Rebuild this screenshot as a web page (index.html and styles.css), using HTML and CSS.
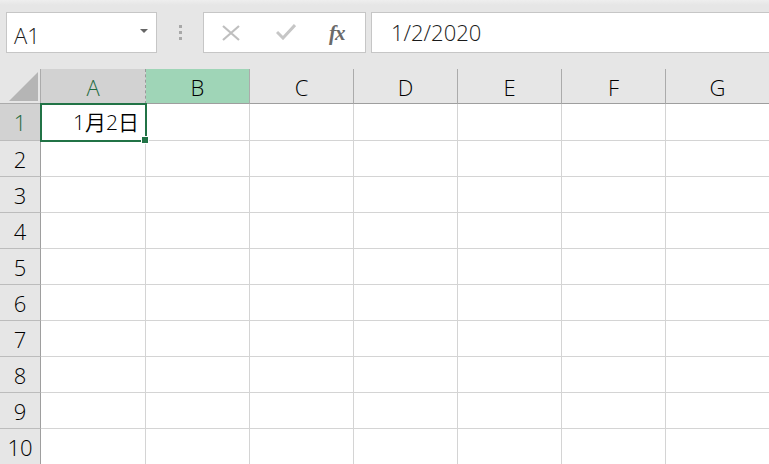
FILE: index.html
```html
<!DOCTYPE html>
<html lang="ja">
<head>
<meta charset="utf-8">
<title>Excel</title>
<link rel="stylesheet" href="styles.css">
</head>
<body>
<div class="app">
  <div class="toolbar">
    <div class="namebox">
      <span class="nb-text">A1</span>
      <span class="nb-arrow"></span>
    </div>
    <div class="grip"><i></i><i></i><i></i></div>
    <div class="fxbtns">
      <svg class="ico ico-x" width="18" height="16" viewBox="0 0 18 16"><path d="M1 1 L17 15 M17 1 L1 15" stroke="#bfbfbf" stroke-width="2.2" fill="none"/></svg>
      <svg class="ico ico-check" width="20" height="16" viewBox="0 0 20 16"><path d="M1 8 L7 14 L19 1" stroke="#c6c6c6" stroke-width="3" fill="none"/></svg>
      <span class="fx">fx</span>
    </div>
    <div class="formula">1/2/2020</div>
  </div>
  <div class="sheet">
    <div class="corner"><svg width="29" height="29" viewBox="0 0 29 29"><path d="M29 0 L29 29 L0 29 Z" fill="#b5b5b5"/></svg></div>
    <div class="ch ch-sel">A</div>
    <div class="ch ch-hl">B</div>
    <div class="ch">C</div>
    <div class="ch">D</div>
    <div class="ch">E</div>
    <div class="ch">F</div>
    <div class="ch">G</div>

    <div class="rh rh-sel">1</div>
    <div class="cell num">1月2日</div><div class="cell"></div><div class="cell"></div><div class="cell"></div><div class="cell"></div><div class="cell"></div><div class="cell"></div>
    <div class="rh">2</div>
    <div class="cell"></div><div class="cell"></div><div class="cell"></div><div class="cell"></div><div class="cell"></div><div class="cell"></div><div class="cell"></div>
    <div class="rh">3</div>
    <div class="cell"></div><div class="cell"></div><div class="cell"></div><div class="cell"></div><div class="cell"></div><div class="cell"></div><div class="cell"></div>
    <div class="rh">4</div>
    <div class="cell"></div><div class="cell"></div><div class="cell"></div><div class="cell"></div><div class="cell"></div><div class="cell"></div><div class="cell"></div>
    <div class="rh">5</div>
    <div class="cell"></div><div class="cell"></div><div class="cell"></div><div class="cell"></div><div class="cell"></div><div class="cell"></div><div class="cell"></div>
    <div class="rh">6</div>
    <div class="cell"></div><div class="cell"></div><div class="cell"></div><div class="cell"></div><div class="cell"></div><div class="cell"></div><div class="cell"></div>
    <div class="rh">7</div>
    <div class="cell"></div><div class="cell"></div><div class="cell"></div><div class="cell"></div><div class="cell"></div><div class="cell"></div><div class="cell"></div>
    <div class="rh">8</div>
    <div class="cell"></div><div class="cell"></div><div class="cell"></div><div class="cell"></div><div class="cell"></div><div class="cell"></div><div class="cell"></div>
    <div class="rh">9</div>
    <div class="cell"></div><div class="cell"></div><div class="cell"></div><div class="cell"></div><div class="cell"></div><div class="cell"></div><div class="cell"></div>
    <div class="rh">10</div>
    <div class="cell"></div><div class="cell"></div><div class="cell"></div><div class="cell"></div><div class="cell"></div><div class="cell"></div><div class="cell"></div>

    <div class="selection"><span class="handle"></span></div>
  </div>
</div>
</body>
</html>
```

FILE: styles.css
```css
* { box-sizing: border-box; }
html, body { margin: 0; padding: 0; }
body {
  width: 769px;
  height: 464px;
  overflow: hidden;
  background: #ffffff;
  font-family: "Open Sans", "Noto Sans CJK JP", sans-serif;
  font-weight: 350;
  color: #000;
}
.app { width: 769px; height: 464px; overflow: hidden; }

.toolbar {
  height: 69px;
  background: linear-gradient(#eeeeee 0, #e6e6e6 5px, #e6e6e6 100%);
  display: flex;
  align-items: flex-start;
  padding: 12px 0 0 6px;
  white-space: nowrap;
}
.namebox {
  width: 151px;
  height: 41px;
  background: #fff;
  border: 1px solid #c6c6c6;
  display: flex;
  align-items: center;
  justify-content: space-between;
  padding: 5px 8px 0 7px;
  flex: none;
}
.nb-text { font-size: 22px; color: #1a1a1a; line-height: 1; }
.nb-arrow {
  width: 0; height: 0;
  border-left: 4px solid transparent;
  border-right: 4px solid transparent;
  border-top: 4px solid #666;
  margin-bottom: 8px;
}
.grip {
  width: 46px;
  flex: none;
  display: flex;
  flex-direction: column;
  align-items: center;
  gap: 3px;
  padding-top: 13px;
}
.grip i { display: block; width: 3px; height: 3px; background: #a8a8a8; }
.fxbtns {
  width: 163px;
  height: 41px;
  flex: none;
  background: #fff;
  border: 1px solid #c6c6c6;
  display: flex;
  align-items: center;
  padding: 0 0 0 18px;
}
.ico { display: block; flex: none; }
.ico-x { margin-right: 36px; }
.ico-check { margin-right: 33px; margin-top: -1px; }
.fx {
  font-family: "Liberation Serif", serif;
  font-style: italic;
  font-weight: bold;
  font-size: 21px;
  color: #6a6a6a;
  line-height: 1;
  letter-spacing: -1px;
  padding-top: 2px;
}
.formula {
  margin-left: 5px;
  flex: none;
  width: 420px;
  height: 41px;
  background: #fff;
  border: 1px solid #c6c6c6;
  font-size: 22px;
  color: #1a1a1a;
  line-height: 38px;
  padding-left: 19px;
}

.sheet {
  position: relative;
  display: grid;
  grid-template-columns: 41px 105px repeat(6, 104px);
  grid-template-rows: 35px 37px repeat(9, 36px);
  background: #fff;
}
.corner {
  background: #e6e6e6;
  border-right: 1px solid #ababab;
  border-bottom: 1px solid #ababab;
  display: flex;
  align-items: flex-end;
  justify-content: flex-end;
  padding: 0 2px 2px 0;
}
.corner svg { display: block; }
.ch {
  background: #e6e6e6;
  border-right: 1px solid #ababab;
  border-bottom: 1px solid #9e9e9e;
  display: flex;
  align-items: center;
  justify-content: center;
  font-size: 22px;
  line-height: 1;
  color: #000;
  padding-top: 1px;
}
.ch-sel { background: #d2d2d2; color: #1e6b41; border-right: 1px dashed #9a9a9a; }
.ch-hl { background: #9fd5b7; color: #000; }
.rh {
  background: #e6e6e6;
  border-right: 1px solid #9e9e9e;
  border-bottom: 1px solid #bcbcbc;
  display: flex;
  align-items: center;
  justify-content: center;
  font-size: 22px;
  line-height: 1;
  color: #000;
}
.rh-sel { background: #d2d2d2; color: #1e6b41; }
.cell {
  border-right: 1px solid #d4d4d4;
  border-bottom: 1px solid #d4d4d4;
}
.num {
  display: flex;
  align-items: center;
  justify-content: flex-end;
  padding-right: 6px;
  font-size: 21px;
  line-height: 1;
  color: #000;
}
.selection {
  position: absolute;
  left: 40px;
  top: 34px;
  width: 107px;
  height: 39px;
  border: 2px solid #217346;
  pointer-events: none;
}
.handle {
  position: absolute;
  right: -4px;
  bottom: -4px;
  width: 6px;
  height: 6px;
  background: #217346;
  border: 1px solid #fff;
  box-sizing: content-box;
}
```
